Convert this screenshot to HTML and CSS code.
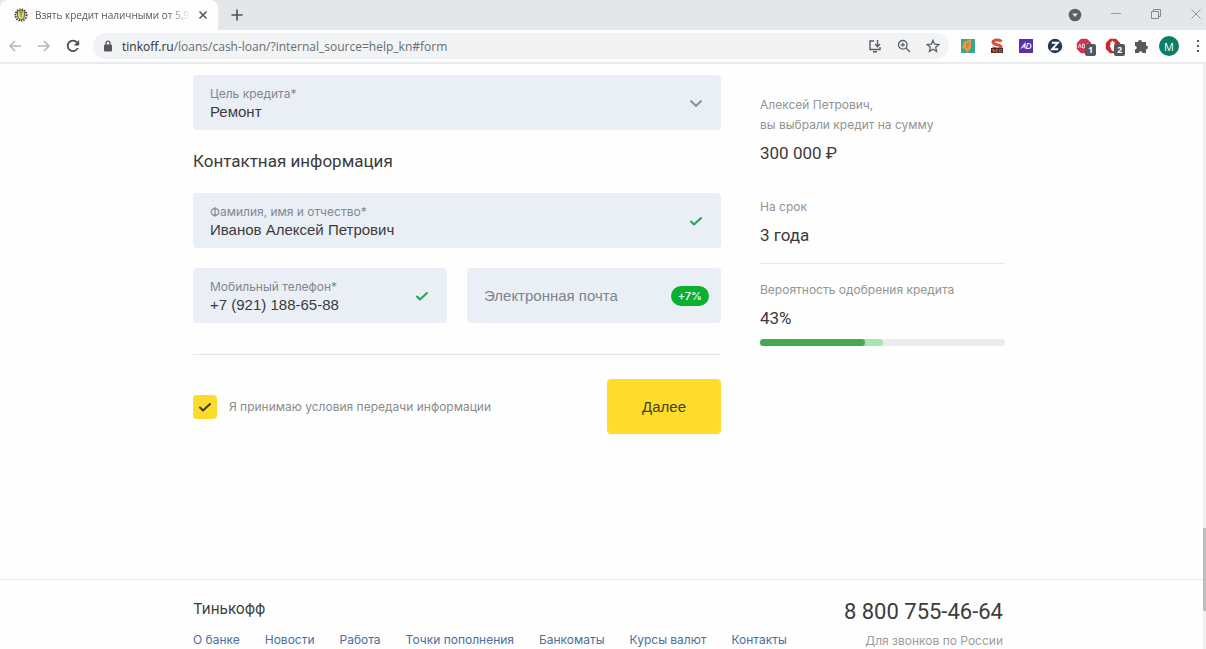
FILE: index.html
```html
<!DOCTYPE html>
<html lang="ru">
<head>
<meta charset="utf-8">
<title>Взять кредит наличными</title>
<link rel="stylesheet" href="styles.css">
</head>
<body>
<header class="browser">
  <div class="tabstrip">
    <div class="tab">
      <svg class="favicon" viewBox="0 0 14 14" width="14" height="14"><circle cx="7" cy="7" r="5.6" fill="none" stroke="#3c3d38" stroke-width="2" stroke-dasharray="1.4 1"/><path d="M3.4 2.8h7.2v4.4c0 2.4-1.6 3.8-3.6 4.8-2-1-3.6-2.4-3.6-4.8z" fill="#d9d36a" stroke="#55552e" stroke-width=".9"/><path d="M5.4 4.5h3.2M7 4.5v4.5" stroke="#77743a" stroke-width=".9"/></svg>
      <span class="tab-title">Взять кредит наличными от 5,9</span>
      <button class="icon-button" aria-label="Закрыть вкладку"><svg viewBox="0 0 10 10" width="10" height="10"><path d="M1.5 1.5l7 7m0-7l-7 7" stroke="#55585c" stroke-width="1.6"/></svg></button>
    </div>
    <button class="icon-button new-tab" aria-label="Новая вкладка"><svg viewBox="0 0 12 12" width="12" height="12"><path d="M6 .5v11M.5 6h11" stroke="#4e5155" stroke-width="1.6"/></svg></button>
    <div class="window-controls">
      <button class="icon-button" aria-label="Поиск вкладок"><svg viewBox="0 0 14 14" width="14" height="14"><circle cx="7" cy="7" r="6.3" fill="#5c5f63"/><path d="M4.2 5.5h5.6L7 9z" fill="#e4e6e8"/></svg></button>
      <button class="icon-button" aria-label="Свернуть"><svg viewBox="0 0 12 12" width="12" height="12"><path d="M1 4.5h10" stroke="#9a9da0"/></svg></button>
      <button class="icon-button" aria-label="Развернуть"><svg viewBox="0 0 12 12" width="12" height="12"><path d="M1.5 2.5h7v7h-7zM3.5 2.5v-2h7v7h-2" fill="none" stroke="#85888b"/></svg></button>
      <button class="icon-button" aria-label="Закрыть"><svg viewBox="0 0 12 12" width="12" height="12"><path d="M1.5 .5l9 9m0-9l-9 9" stroke="#919497"/></svg></button>
    </div>
  </div>
  <div class="toolbar">
    <div class="nav-buttons">
      <button class="icon-button" aria-label="Назад"><svg viewBox="0 0 14 14" width="14" height="14"><path d="M13 7H2M7 2L2 7l5 5" fill="none" stroke="#b5b7b9" stroke-width="1.5"/></svg></button>
      <button class="icon-button" aria-label="Вперёд"><svg viewBox="0 0 14 14" width="14" height="14"><path d="M1 7h11M7 2l5 5-5 5" fill="none" stroke="#b5b7b9" stroke-width="1.5"/></svg></button>
      <button class="icon-button" aria-label="Обновить"><svg viewBox="0 0 14 14" width="14" height="14"><path d="M11.8 9A5.3 5.3 0 1 1 11 3.4" fill="none" stroke="#4c4f53" stroke-width="1.8"/><path d="M13.2 1v5.4H7.8z" fill="#4c4f53"/></svg></button>
    </div>
    <div class="address">
      <svg viewBox="0 0 10 12" width="10" height="12"><rect x="1" y="4.5" width="8" height="7" rx="1" fill="#55585c"/><path d="M3 5V3.2a2 2 0 0 1 4 0V5" fill="none" stroke="#55585c" stroke-width="1.3"/></svg>
      <span class="url"><b>tinkoff.ru</b>/loans/cash-loan/?internal_source=help_kn#form</span>
      <button class="icon-button" aria-label="Установить"><svg viewBox="0 0 14 14" width="14" height="14"><path d="M6 2H2v8.500h10V8M5 12.700h4M9.500 1v6.500M7 5l2.500 2.700L12 5" fill="none" stroke="#5b5e62" stroke-width="1.400"/></svg></button>
      <button class="icon-button" aria-label="Масштаб"><svg viewBox="0 0 14 14" width="14" height="14"><circle cx="5.800" cy="5.800" r="4.300" fill="none" stroke="#5b5e62" stroke-width="1.300"/><path d="M9 9l4 4M3.800 5.800h4M5.800 3.800v4" stroke="#5b5e62" stroke-width="1.300"/></svg></button>
      <button class="icon-button" aria-label="В закладки"><svg viewBox="0 0 14 14" width="14" height="14"><path d="M7 1.400l1.700 3.800 4.100.4-3.100 2.700.9 4.100L7 10.200l-3.600 2.200.9-4.100-3.100-2.700 4.100-.4z" fill="none" stroke="#5b5e62" stroke-width="1.300"/></svg></button>
    </div>
    <div class="extensions">
      <svg viewBox="0 0 16 16" width="16" height="16"><path d="M1 1h14v14H1z" fill="#38a692"/><path d="M4 4l7-3v9l-4 5-2-4-3-1z" fill="#d9a242"/><path d="M6 5l3-1v5l-3 1z" fill="#e87b31"/></svg>
      <svg viewBox="0 0 16 16" width="16" height="16"><path d="M12.500 3.500C10 1 4 1.600 4 4.300S12 6.500 12 9s-6 2.500-8.500.5" fill="none" stroke="#d8502f" stroke-width="3"/><path d="M2 10h12v5H2z" fill="#4b2a25"/><path d="M5.500 11.500h-2v1h2v1.500h-2M9 11.500H7V14h2M7 12.700h1.500M10.500 11.500h2V14h-2z" fill="none" stroke="#d8604a" stroke-width=".8"/></svg>
      <svg viewBox="0 0 16 16" width="16" height="16"><path d="M1 1h14v14H1z" fill="#5a32a8"/><path d="M3 10.500L7 5.500v5M4.500 9h3M9.500 5.500L8.500 10.500h1.800c3.500 0 3.500-5 0-5z" fill="none" stroke="#eee7fb" stroke-width="1.200"/></svg>
      <svg viewBox="0 0 16 16" width="16" height="16"><circle cx="8" cy="8" r="7.200" fill="#25384f"/><path d="M4.800 4.800h6L5.200 11.200h6" fill="none" stroke="#fff" stroke-width="2"/></svg>
      <span class="extension"><svg viewBox="0 0 16 16" width="16" height="16"><path d="M5 .8h6L15.200 5v6L11 15.200H5L.8 11V5z" fill="#cf3350"/><path d="M2.300 10l1.500-4 1.500 4M6.500 10V6h1.500q1.500 1 0 2q1.800 1 0 2zM11 10V6h1.500q1.500 1 0 2H11" fill="none" stroke="#f6d3d9"/></svg><span class="badge">1</span></span>
      <span class="extension"><svg viewBox="0 0 16 16" width="16" height="16"><path d="M5 .8h6L15.200 5v6L11 15.200H5L.8 11V5z" fill="#cb2b30"/><path d="M4.500 7l1 .5V4l1 .2.500-1.400 1 .2.500 1 1-.3.500 5.300 1.500-1v2L9 13H7z" fill="#fff"/></svg><span class="badge">2</span></span>
      <svg viewBox="0 0 14 16" width="14" height="16"><path d="M1 4h3a2 2 0 1 1 4 0h4v3.500a1.900 1.900 0 1 1 0 3.800V15H8.500a1.800 1.800 0 1 0-3.600 0H1v-3.500a1.800 1.800 0 1 0 0-3.600z" fill="#55585c"/></svg>
      <button class="profile">М</button>
      <button class="icon-button menu" aria-label="Меню"><svg viewBox="0 0 4 14" width="4" height="14"><path d="M1 1h2v2H1zM1 6h2v2H1zM1 11h2v2H1z" fill="#55585c"/></svg></button>
    </div>
  </div>
</header>

<div class="viewport">
  <div class="page">
    <main class="container application">
      <form class="form">
        <div class="field">
          <div class="field-body">
            <label for="purpose">Цель кредита*</label>
            <select id="purpose"><option>Ремонт</option></select>
          </div>
          <svg viewBox="0 0 14 14" width="14" height="14"><path d="M2 5l5 5 5-5" fill="none" stroke="#8b929e" stroke-width="2" stroke-linecap="round" stroke-linejoin="round"/></svg>
        </div>
        <h2>Контактная информация</h2>
        <div class="field">
          <div class="field-body">
            <label for="name">Фамилия, имя и отчество*</label>
            <input id="name" type="text" value="Иванов Алексей Петрович">
          </div>
          <svg viewBox="0 0 14 14" width="14" height="14"><path d="M2 7.500l3 3L12 4" fill="none" stroke="#1fa851" stroke-width="2" stroke-linecap="round" stroke-linejoin="round"/></svg>
        </div>
        <div class="field-row">
          <div class="field">
            <div class="field-body">
              <label for="phone">Мобильный телефон*</label>
              <input id="phone" type="tel" value="+7 (921) 188-65-88">
            </div>
            <svg viewBox="0 0 14 14" width="14" height="14"><path d="M2 7.500l3 3L12 4" fill="none" stroke="#1fa851" stroke-width="2" stroke-linecap="round" stroke-linejoin="round"/></svg>
          </div>
          <div class="field field-bonus">
            <div class="field-body">
              <input type="email" aria-label="Электронная почта" placeholder="Электронная почта">
            </div>
            <span class="bonus">+7%</span>
          </div>
        </div>
        <div class="actions">
          <label class="agreement"><input type="checkbox" checked>Я принимаю условия передачи информации</label>
          <button type="submit" class="submit">Далее</button>
        </div>
      </form>
      <aside class="summary">
        <section>
          <p>Алексей Петрович,<br>вы выбрали кредит на сумму</p>
          <strong>300 000 ₽</strong>
        </section>
        <section class="term">
          <p>На срок</p>
          <strong>3 года</strong>
        </section>
        <section>
          <p>Вероятность одобрения кредита</p>
          <strong>43%</strong>
          <div class="meter">
            <div class="meter-next" style="width:50%"></div>
            <div class="meter-now" style="width:43%"></div>
          </div>
        </section>
      </aside>
    </main>
    <footer class="footer">
      <div class="container footer-body">
        <div>
          <div class="brand">Тинькофф</div>
          <nav class="links">
            <a href="#">О банке</a><a href="#">Новости</a><a href="#">Работа</a><a href="#">Точки пополнения</a><a href="#">Банкоматы</a><a href="#">Курсы валют</a><a href="#">Контакты</a>
          </nav>
        </div>
        <div class="hotline">
          <div class="hotline-number">8 800 755-46-64</div>
          <div class="hotline-note">Для звонков по России</div>
        </div>
      </div>
    </footer>
  </div>
  <div class="scrollbar"><div class="scrollbar-thumb"></div></div>
</div>
</body>
</html>
```
FILE: styles.css
```css
* { box-sizing: border-box; }
body {
  margin: 0;
  height: 100vh;
  display: flex;
  flex-direction: column;
  overflow: hidden;
  background: #fefefe;
  color: #3b3b3b;
  font-family: Inter, "Liberation Sans", sans-serif;
  font-size: 12px;
}
button, input, select { font: inherit; color: inherit; }
svg { display: block; flex: none; }
h2, p { margin: 0; font-weight: 400; }

/* Browser frame */
.browser { flex: none; border-bottom: 2px solid #e9eaeb; font-family: "Open Sans", sans-serif; }
.icon-button { display: flex; padding: 0; border: 0; background: none; }
.tabstrip { display: flex; align-items: center; height: 30px; background: #e4e7e9; padding-right: 4px; }
.tab {
  display: flex;
  align-items: center;
  gap: 7px;
  width: 218px;
  height: 30px;
  padding: 0 10px 0 14px;
  background: #fefefe;
  border-radius: 8px 8px 0 0;
}
.tab-title {
  flex: 1;
  white-space: nowrap;
  font-size: 10px;
  color: #55585c;
  mask-image: linear-gradient(90deg, #000 85%, transparent);
}
.new-tab { margin-left: 13px; }
.window-controls { display: flex; align-items: center; gap: 28px; margin-left: auto; }
.toolbar { display: flex; align-items: center; height: 32px; padding: 0 6px 0 8px; background: #fefefe; }
.nav-buttons { display: flex; gap: 15px; margin-right: 13px; }
.address {
  flex: 1;
  display: flex;
  align-items: center;
  gap: 15px;
  height: 26px;
  padding: 0 9px 0 10px;
  border-radius: 13px;
  background: #f1f3f4;
}
.url { flex: 1; margin-left: -6px; font-size: 12px; color: #6a6d71; }
.url b { font-weight: 400; color: #2b2d30; }
.extensions { display: flex; align-items: center; gap: 13px; margin-left: 11px; }
.extension { position: relative; }
.badge {
  position: absolute;
  left: 9px;
  top: 6px;
  width: 11px;
  height: 12px;
  border-radius: 2px;
  background: #55575a;
  color: #fff;
  font-size: 9px;
  font-weight: 700;
  line-height: 12px;
  text-align: center;
}
.profile {
  width: 20px;
  height: 20px;
  margin-left: -2px;
  padding: 0;
  border: 0;
  border-radius: 50%;
  background: #0d7d68;
  color: #fff;
  font-size: 11px;
}
.menu { margin-left: 4px; }

/* Page */
.viewport { flex: 1; min-height: 0; display: flex; }
.page { flex: 1; overflow: hidden; padding-top: 11px; }
.container { width: min(812px, 100%); margin: 0 auto; }
.application, .footer { padding-right: 5px; }
.application {
  display: grid;
  grid-template-columns: 528fr 245fr;
  gap: 39px;
  width: min(817px, 100%);
  padding-bottom: 145px;
  align-items: start;
}
.field {
  display: flex;
  align-items: center;
  min-height: 55px;
  padding: 0 18px 0 17px;
  border-radius: 4px;
  background: #eaeff6;
}
.field-body { flex: 1; min-width: 0; display: flex; flex-direction: column; }
.field-body label { line-height: 18px; color: #82878f; }
.field-body input, .field-body select {
  width: 100%;
  height: 17px;
  padding: 0;
  border: 0;
  outline: 0;
  background: none;
  appearance: none;
  font-family: "Liberation Sans", sans-serif;
  font-size: 15px;
  line-height: 17px;
}
.field-body input::placeholder { color: #7e848d; opacity: 1; }
.field-row { display: grid; grid-template-columns: 1fr 1fr; gap: 20px; margin-top: 20px; }
.field-bonus { padding-right: 12px; }
.bonus {
  padding: 0 7px;
  border-radius: 10px;
  background: #0bb02f;
  color: #fff;
  font-size: 11px;
  font-weight: 500;
  line-height: 20px;
}
h2 { padding: 19px 0 20px; font-family: Roboto, sans-serif; font-size: 17px; line-height: 24px; }
.actions {
  display: flex;
  align-items: center;
  justify-content: space-between;
  margin-top: 31px;
  padding-top: 24px;
  border-top: 1px solid #e3e4e6;
}
.agreement { display: flex; align-items: center; gap: 12px; color: #8b8b8b; }
.agreement input {
  appearance: none;
  width: 24px;
  height: 24px;
  margin: 0;
  border-radius: 4px;
  background: #fbdc2d url("data:image/svg+xml,%3Csvg xmlns='http://www.w3.org/2000/svg' viewBox='0 0 14 14'%3E%3Cpath d='M2 7.5l3 3L12 4' fill='none' stroke='%23443a12' stroke-width='2' stroke-linecap='round' stroke-linejoin='round'/%3E%3C/svg%3E") center / 14px no-repeat;
}
.submit {
  min-height: 55px;
  padding: 0 35px;
  border: 0;
  border-radius: 4px;
  background: #fddc2c;
  color: #473f1c;
  font-family: "Liberation Sans", sans-serif;
  font-size: 15px;
}

.summary { padding-top: 20px; color: #939393; line-height: 20px; }
.summary strong {
  display: block;
  margin-top: 4px;
  color: #3b3b3b;
  font-family: Roboto, sans-serif;
  font-size: 17px;
  font-weight: 400;
  line-height: 28px;
}
.term { margin: 30px 0 16px; padding-bottom: 14px; border-bottom: 1px solid #e6e7e8; }
.meter { display: grid; margin-top: 7px; border-radius: 4px; background: #ebebed; }
.meter-now, .meter-next { grid-area: 1 / 1; height: 7px; border-radius: 4px; }
.meter-now { background: #45a852; }
.meter-next { background: #a4e6ae; }

.footer { border-top: 1px solid #e5e6e7; }
.footer-body { display: flex; justify-content: space-between; padding: 17px 2px 18px 0; }
.brand { font-size: 15px; line-height: 24px; }
.links { display: flex; gap: 25px; margin-top: 9px; line-height: 20px; }
.links a { color: #4a6f9f; text-decoration: none; }
.hotline { text-align: right; }
.hotline-number { font-family: Roboto, sans-serif; font-size: 22px; line-height: 30px; }
.hotline-note { margin-top: 4px; color: #9c9c9c; line-height: 20px; }

.scrollbar { width: 3px; background: #f1f1f1; display: grid; grid-template-rows: 464fr 83fr 38fr; }
.scrollbar-thumb { grid-row: 2; background: #bdbdbd; }
```
